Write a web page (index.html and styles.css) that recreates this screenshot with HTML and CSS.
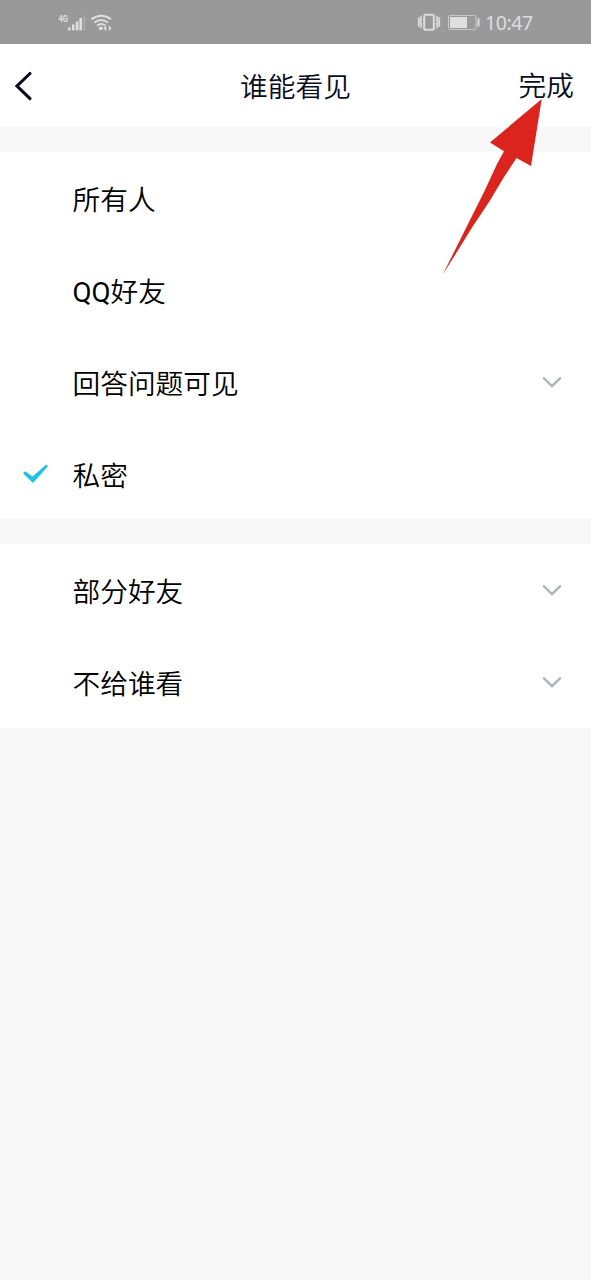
FILE: index.html
```html
<!DOCTYPE html>
<html lang="zh-CN">
<head>
<meta charset="utf-8">
<title>谁能看见</title>
<link rel="stylesheet" href="styles.css">
</head>
<body>
<div class="status">
  <svg class="signal" width="60" height="24" viewBox="0 0 60 24">
    <text class="net" x="1.500" y="11.500" textLength="9.500" lengthAdjust="spacingAndGlyphs">4G</text>
    <g fill="#e0e0e0">
      <rect x="11" y="17.500" width="2.600" height="2.800"/>
      <rect x="15" y="14.500" width="2.600" height="5.800"/>
      <rect x="18.800" y="11.500" width="2.600" height="8.800"/>
      <rect x="22.400" y="8" width="2.600" height="12.300"/>
      <rect x="26.400" y="5" width="2" height="15.300" opacity=".25"/>
      <circle cx="43.800" cy="18.300" r="1.900"/>
      <path d="M46.500 18.300l2.700-2.700v5.400zM54.500 18.300l-2.700-2.700v5.400z"/>
    </g>
    <path d="M34.500 9.200Q44.300 2.100 54 9.200M37.500 12.500Q44.300 7.500 51 12.500M40.200 15.500Q44.300 12.400 48.300 15.500" fill="none" stroke="#e0e0e0" stroke-width="2"/>
  </svg>
  <div class="status-right">
    <svg width="64" height="24" viewBox="0 0 64 24">
      <g fill="none" stroke="#dcdcdc">
        <rect x="7.200" y="4.700" width="9.600" height="15" rx="1" stroke-width="2"/>
        <path d="M4.500 6l-1.200 2 1.200 2-1.200 2 1.200 2-1.200 2 1.200 2M2 7.500l-.6 1.500 .6 1.500-.6 1.500 .6 1.500-.6 1.500 .6 1.500M19.500 6l1.200 2-1.200 2 1.200 2-1.200 2 1.200 2-1.200 2M22 7.500l.6 1.500-.6 1.500 .6 1.500-.6 1.500 .6 1.500-.6 1.500" stroke-width="1.600"/>
        <rect x="31.500" y="5.500" width="27.500" height="14" rx="1.500" stroke-width="1" stroke="#c8c8c8"/>
      </g>
      <rect x="33" y="7" width="17" height="11" fill="#dedede"/>
      <rect x="60.500" y="8.500" width="2" height="8" fill="#dedede"/>
    </svg>
    <span class="time">10:47</span>
  </div>
</div>
<header class="nav">
  <svg class="back" width="22" height="34" viewBox="0 0 22 34"><path d="M19 3.500L6 16l13 12.700" fill="none" stroke="#080c1c" stroke-width="3.100" stroke-linecap="round"/></svg>
  <h1 class="title">谁能看见</h1>
  <span class="done">完成</span>
</header>
<main>
  <section class="group">
    <div class="row"><span class="mark"></span><span class="label">所有人</span></div>
    <div class="row"><span class="mark"></span><span class="label"><span class="latin">QQ</span>好友</span></div>
    <div class="row"><span class="mark"></span><span class="label">回答问题可见</span><svg class="chev" width="20" height="14" viewBox="0 0 20 14"><path d="M2 2.300l8 7.700 8-7.700"/></svg></div>
    <div class="row"><span class="mark"><svg width="28" height="22" viewBox="0 0 28 22"><path d="M1 9.200l2.200-1.900 7.300 5.100L24.200.6l1.800 1.700L11 19z" fill="#1fc3e4"/></svg></span><span class="label">私密</span></div>
  </section>
  <section class="group">
    <div class="row"><span class="mark"></span><span class="label">部分好友</span><svg class="chev" width="20" height="14" viewBox="0 0 20 14"><path d="M2 2.300l8 7.700 8-7.700"/></svg></div>
    <div class="row"><span class="mark"></span><span class="label">不给谁看</span><svg class="chev" width="20" height="14" viewBox="0 0 20 14"><path d="M2 2.300l8 7.700 8-7.700"/></svg></div>
  </section>
</main>
<svg class="pointer" width="110" height="182" viewBox="0 0 110 182"><path d="M100.700 5L49 48.500l14 8.700L56 70 43.500 97 32 120 22 140 10 164 1.500 181 14 161 32 132 49 106.500 63 83 75.500 64l14.500 8z" fill="#dc241f"/></svg>
</body>
</html>
```
FILE: styles.css
```css
* { box-sizing: border-box; }
body {
  margin: 0;
  min-height: 1280px;
  position: relative;
  background: #f8f8f8;
  color: #000;
  font-family: Roboto, "Noto Sans CJK SC", sans-serif;
  font-size: 27.7px;
}
svg { display: block; flex: none; }
.status {
  height: 44px;
  background: #999;
  display: flex;
  justify-content: space-between;
  padding: 10px 58px 0 57px;
}
.net { font: 700 9.5px Roboto, sans-serif; fill: #e0e0e0; }
.status-right { display: flex; gap: 4px; }
.time {
  font: 400 19.5px/26px "Noto Sans", sans-serif;
  color: #dedede;
  width: 48px;
  white-space: nowrap;
  letter-spacing: -.4px;
}
.nav {
  height: 83px;
  background: #fff;
  color: #080c20;
  display: grid;
  grid-template-columns: 1fr auto 1fr;
  align-items: center;
  padding: 2px 17px 0 11px;
}
.title {
  margin: 0;
  padding: 3px 0 0 6px;
  font-size: 27.7px;
  font-weight: 350;
  line-height: 40px;
}
.done { justify-self: end; padding-top: 1px; line-height: 40px; font-weight: 350; }
.group { margin-top: 25px; background: #fff; }
.row {
  height: 92px;
  display: flex;
  align-items: center;
  padding: 2px 29px 0 22px;
}
.group:first-child .row:last-child { height: 91px; }
.mark { width: 50.5px; }
.label { flex: 1; padding-top: 4px; line-height: 40px; font-weight: 350; }
.latin { font-weight: 400; }
.chev { fill: none; stroke: #adb3bd; stroke-width: 2.4; stroke-linecap: round; }
.pointer { position: absolute; left: 441px; top: 94px; }
```
